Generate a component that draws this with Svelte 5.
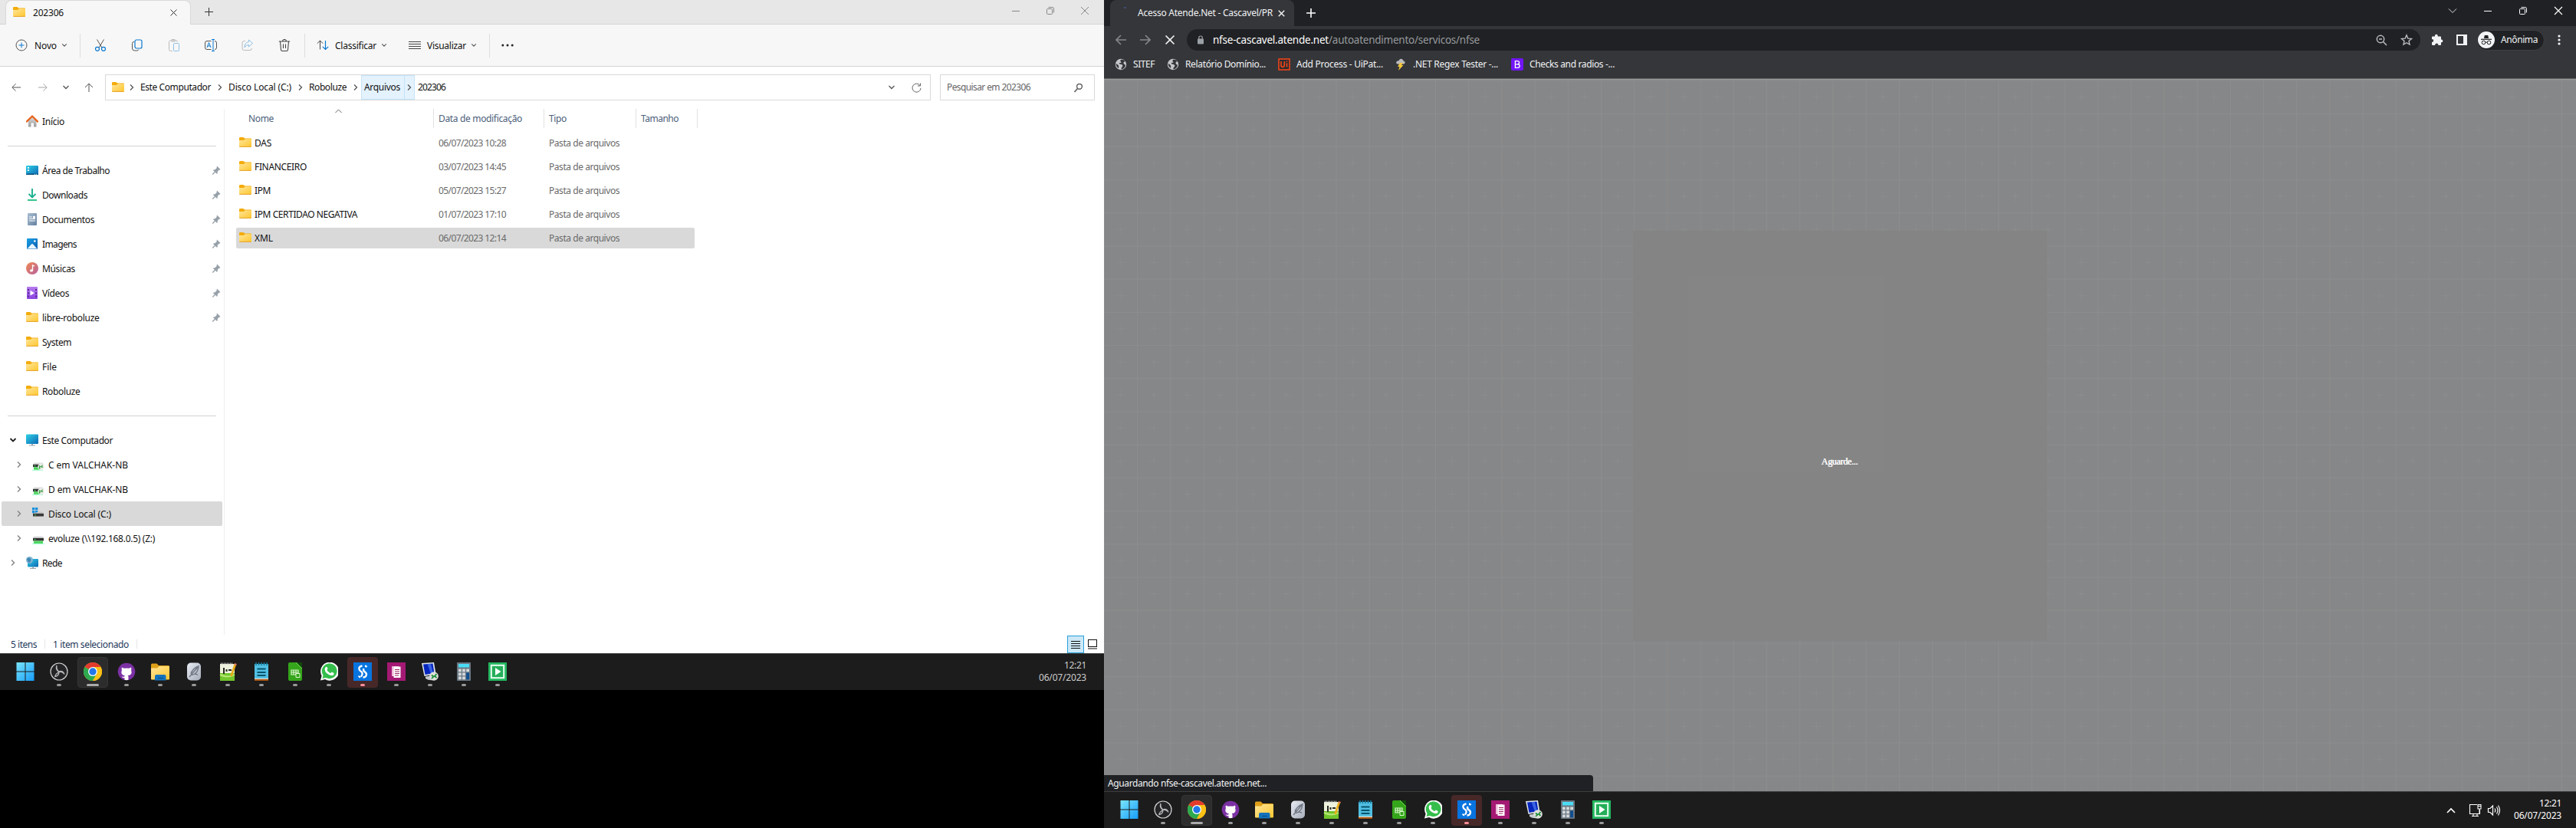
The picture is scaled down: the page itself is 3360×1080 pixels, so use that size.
<script>
  // Adjusts tracking so a label occupies the given width.
  function fit(node, width) {
    const natural = node.getBoundingClientRect().width;
    const count = node.textContent.length;
    node.style.letterSpacing = `${(width - natural) / count}px`;
  }

  const quick = [
    { icon: 'desktop', label: 'Área de Trabalho', w: 88, pin: true },
    { icon: 'download', label: 'Downloads', w: 59, pin: true },
    { icon: 'doc', label: 'Documentos', w: 68, pin: true },
    { icon: 'image', label: 'Imagens', w: 45, pin: true },
    { icon: 'music', label: 'Músicas', w: 43, pin: true },
    { icon: 'video', label: 'Vídeos', w: 35, pin: true },
    { icon: 'folder', label: 'libre-roboluze', w: 74.5, pin: true },
    { icon: 'folder', label: 'System', w: 38 },
    { icon: 'folder', label: 'File', w: 19 },
    { icon: 'folder', label: 'Roboluze', w: 49.5 }
  ];
  const tree = [
    { icon: 'pc', label: 'Este Computador', w: 92, open: true },
    { icon: 'netoff', label: 'C em VALCHAK-NB', w: 104, child: true },
    { icon: 'netoff', label: 'D em VALCHAK-NB', w: 104, child: true },
    { icon: 'osdisk', label: 'Disco Local (C:)', w: 82, child: true, selected: true },
    { icon: 'netdisk', label: 'evoluze (\\\\192.168.0.5) (Z:)', w: 139, child: true },
    { icon: 'network', label: 'Rede', w: 26 }
  ];
  const files = [
    { name: 'DAS', w: 22, date: '06/07/2023 10:28' },
    { name: 'FINANCEIRO', w: 68, date: '03/07/2023 14:45' },
    { name: 'IPM', w: 21, date: '05/07/2023 15:27' },
    { name: 'IPM CERTIDAO NEGATIVA', w: 134, date: '01/07/2023 17:10' },
    { name: 'XML', w: 24, date: '06/07/2023 12:14', selected: true }
  ];
  const apps = ['win', 'obs', 'chrome', 'github', 'files', 'feather', 'notepadpp', 'notepad', 'calc', 'whatsapp', 'sourcetree', 'pages', 'remote', 'calculator', 'camtasia'];
  const bookmarks = [
    { icon: 'globe', label: 'SITEF', w: 28, slot: 60 },
    { icon: 'globe', label: 'Relatório Domínio...', w: 105, slot: 137 },
    { icon: 'uipath', label: 'Add Process - UiPat...', w: 113, slot: 144 },
    { icon: 'storm', label: '.NET Regex Tester -...', w: 111, slot: 144 },
    { icon: 'bootstrap', label: 'Checks and radios -...', w: 111, slot: 144 }
  ];
</script>

{#snippet icon(name)}
  <svg class="i16" viewBox="0 0 16 16" fill="none">
    {#if name === 'folder'}
      <g transform="translate(0 -.700)">
        <path d="M0 3q0-1.300 1.200-1.300h4L7.400 3.300H15q1 0 1 1V6H0z" fill="#f3ac0c" />
        <path d="M0 5.800h5.800L8 4h7.200q.8 0 .8.800v8.600q0 1-1 1H1q-1 0-1-1z" fill="url(#gFolder)" />
        <path d="M.3 14.100h15.400" stroke="#e5a32d" />
      </g>
    {:else if name === 'home'}
      <path d="M3 7v8.500h3.500v-4.200q0-.8.800-.8h1.900q.8 0 .8.800v4.200H13.500V7L8 2z" fill="url(#gGrey)" />
      <path d="M.8 8.600L8 1.500l7.200 7.100" stroke="#e8611a" stroke-width="2.200" stroke-linecap="round" stroke-linejoin="round" />
    {:else if name === 'desktop'}
      <rect y="2" width="16" height="12" rx="1" fill="url(#gBlue)" />
      <path d="M0 12.500h16V13q0 1-1 1H1q-1 0-1-1z" fill="#0a4f7f" />
      <path d="M2 4h2v1.700H2zM2 7.200h2v1.700H2z" fill="#fff" /><path d="M11 13.300h1M13 13.300h1" stroke="#bff" />
    {:else if name === 'download'}
      <path d="M8 0v11M3.500 7L8 11.400 12.500 7" stroke="#1bb08f" stroke-width="1.900" /><path d="M2 15h12" stroke="#35c58e" stroke-width="2" />
    {:else if name === 'doc'}
      <rect x="2" width="12" height="16" rx="1" fill="url(#gDoc)" /><path d="M4 5h4M4 7.500h8M4 10h8" stroke="#fff" stroke-width="1.200" /><path d="M9 3.800h3v3H9z" fill="#fff" />
    {:else if name === 'image'}
      <rect x="1" y="1" width="14" height="14" rx="1" fill="url(#gImg)" /><path d="M1.500 14.500L7 8.500q1-.8 2 0l5.500 6z" fill="#e8f6ff" /><circle cx="11.300" cy="4.500" r="1.300" fill="#fff" />
    {:else if name === 'music'}
      <circle cx="8" cy="8" r="8" fill="url(#gMusic)" /><ellipse cx="7" cy="10.900" rx="2" ry="1.700" fill="#fff" /><path d="M8.500 11V4l2.500 1.200" stroke="#fff" stroke-width="1.300" />
    {:else if name === 'video'}
      <rect x="1" width="14" height="16" rx="1" fill="url(#gVid)" /><path d="M3 3v11M13 3v11" stroke="#4b2382" stroke-width="1.700" stroke-dasharray="2 2.200" /><path d="M5.500 4.800v6.800L11 8.200z" fill="#fff" />
    {:else if name === 'pc'}
      <rect y=".5" width="16" height="12.500" rx="1" fill="url(#gBlue)" /><path d="M7 13h2v1.500H7zM4 14.500h8v1H4z" fill="#9aa3aa" />
    {:else if name === 'network'}
      <rect x="2" y="3" width="14" height="10.500" rx="1" fill="url(#gBlue)" /><path d="M8 13.500h2v1.500H8zM5 15h8v1H5z" fill="#9aa3aa" /><circle cx="4.500" cy="4.500" r="4.500" fill="#7fb4d2" /><path d="M1 3q3-3 5 0 1 3-2 5Q2 6 1 3z" fill="#3f86b4" />
    {:else if name === 'netoff'}
      <path d="M2.500 5.500h11L15 8H1z" fill="#dcdddf" /><rect x="1" y="7.800" width="9" height="3.400" fill="#333" /><path d="M2.500 9.700h2" stroke="#42e35c" /><path d="M2 11.300h7v3.500H2z" fill="#4dd45e" /><path d="M0 15.300h14" stroke="#9fc" /><circle cx="11.500" cy="11" r="4.200" fill="#ececea" /><path d="M9 12l1.500-1.500L9 9.500M13.500 8.500L12 10.500l2 1M9 13.500L10.500 12M12.500 12v-1.500" stroke="#2e9b35" stroke-width="1.100" />
    {:else if name === 'netdisk'}
      <path d="M2.500 5.500h11L15 8H1z" fill="#dcdddf" /><rect x="1" y="7.800" width="14" height="3.600" fill="#333" /><path d="M2.500 9.800h2" stroke="#42e35c" /><path d="M2 11.500h12V15H2z" fill="#4dd45e" /><path d="M0 15.300h16" stroke="#9fc" />
    {:else if name === 'osdisk'}
      <path d="M0 0h3.300v3.300H0zM4 0h3.300v3.300H4zM0 4h3.300v3.300H0zM4 4h3.300v3.300H4z" fill="#1490df" /><path d="M7.800 5.500H13L15 8H1z" fill="#c4c6c8" /><rect x="1" y="7.800" width="14" height="3.700" fill="#3a3a3a" /><path d="M3 9.800h2" stroke="#42e35c" />
    {:else if name === 'globe'}
      <circle cx="8" cy="8" r="7.200" fill="#c3c6ca" /><path d="M9 1.500q-3 1.500-1 3T5.500 6Q6 8 8.500 8t1.500 3q-2 1-1.500 3.500 5-1 5.500-6-2 0-2.500-2T14 4Q12 1.500 9 1.500zM1.500 7q3 1 3.500 2.500t0 3.500Q2 11.500 1.500 7z" fill="#35363a" />
    {:else if name === 'uipath'}
      <rect x="1" y="1" width="14" height="14" fill="#2b2c30" stroke="#fa4616" stroke-width="1.500" /><path d="M4 4v5q0 2.500 2 2.500T8.300 9V4M11.500 6.300v5.300M11.500 3.500v1.600" stroke="#fa4616" stroke-width="1.600" />
    {:else if name === 'storm'}
      <path d="M4 7.500Q1.500 7 2.500 4.500 4 3 5.500 3.200 7 0 10 1.200q1.500.8 1.500 2.300Q14 4 13.500 6t-2.500 1.500z" fill="#b9bbbd" /><path d="M7 6L4 11h2.500L5 16l6.500-7H9l2-3z" fill="#f6c83b" />
    {:else if name === 'bootstrap'}
      <rect width="16" height="16" rx="2" fill="#7215f5" /><path d="M5.400 3.700v8.600h3.300q2.500 0 2.500-2.300 0-2-2.500-2.200H5.400h3q2.200-.1 2.200-2.100 0-2-2.200-2z" stroke="#fff" stroke-width="1.300" />
    {:else if name === 'pin'}
      <path d="M9 2.500l4.500 4.500-1 .8h-1L9.700 10q.3 2-.6 3L3.800 8q1-1 2.800-.8L8.700 5V3.600z" fill="#97a0a8" /><path d="M6.500 10.300L3.200 13.500" stroke="#97a0a8" stroke-width="1.300" />
    {/if}
  </svg>
{/snippet}

{#snippet app(name)}
  <svg class="i24" viewBox="0 0 24 24" fill="none">
    {#if name === 'win'}
      <path d="M.5 0h11v11.500H.5zM12.500 0h11v11.500h-11zM.5 12.500h11V24H.5zM12.500 12.500h11V24h-11z" fill="url(#gWin)" />
    {:else if name === 'obs'}
      <circle cx="12" cy="12" r="11" fill="#252427" stroke="#d2d2d2" stroke-width="1.200" />
      <path d="M12 12Q7 10 9 4M12 12q5-2 7 3.500M12 12q0 6-5.500 6.500M9 4q-1 5 3 8M12 12q5 0 7 3.500M12 12q-4 3-5.500 6.500" stroke="#b9b9b9" stroke-width="1.300" />
    {:else if name === 'chrome'}
      <circle cx="12" cy="12" r="12" fill="#fbc116" /><path d="M12 12L1.600 6A12 12 0 0 1 22.400 6H12z" fill="#e33b2e" /><path d="M12 12L1.600 6A12 12 0 0 0 12 24l5.200-9z" fill="#2da94f" /><path d="M12 6h10.400A12 12 0 0 1 12 24l5.200-9z" fill="#fbc116" /><circle cx="12" cy="12" r="6" fill="#fff" /><circle cx="12" cy="12" r="4.700" fill="#2278ea" />
    {:else if name === 'github'}
      <circle cx="12" cy="12" r="11.300" fill="#7b30a3" /><path d="M6 6.500l2.800 1.300q3-.8 6.400 0L18 6.500q.8 2 .1 3.800 2.200 6-4.400 6.900l.8 1.300v4.300q-2.500.8-5 0v-2.600q-2.800.5-4-2 2.300 1 3.800.2l.5-1.200Q3.700 16.300 5.900 10.300 5.200 8.500 6 6.500z" fill="#fff" />
    {:else if name === 'files'}
      <path d="M0 3q0-1.500 1.500-1.500h6L10 4h12.500Q24 4 24 5.500V9H0z" fill="#dfa019" /><path d="M0 7.500h8L10.500 5H24v16.500q0 1-1 1H1q-1 0-1-1z" fill="url(#gFolder)" /><path d="M5 23.500v-5.500q0-2 2-2h10.500q2 0 2 2v5.500z" fill="#1272bd" /><path d="M9 20.500h7" stroke="#094b83" />
    {:else if name === 'feather'}
      <rect x="3" y=".5" width="18" height="23" rx="5" fill="url(#gSilver)" /><path d="M6 19L17 6M8 15q2-7 10-10-1 10-9 11.500M10 12l-2 1M13 15l4 1" stroke="#737986" stroke-width="1.500" />
    {:else if name === 'notepadpp'}
      <path d="M2 2h19v22H2z" fill="#eef1dd" /><path d="M2 14h19v10H2z" fill="#72c62d" /><path d="M2 16q10 5 19 0" stroke="#b9e878" stroke-width="2" /><path d="M3 1.500h15" stroke="#bbb" stroke-width="2" stroke-dasharray="1 1" /><path d="M7 7v8M10.500 9v3M13 10h4" stroke="#292b24" stroke-width="2" /><path d="M22 2L16.500 18" stroke="#e7ad1b" stroke-width="2.800" /><path d="M22.600 1.500L22 3.500" stroke="#d56f63" stroke-width="2.800" />
    {:else if name === 'notepad'}
      <path d="M3 2h18v20H3z" fill="#51bfe2" /><path d="M5 0v4M8.500 0v4M12 0v4M15.500 0v4M19 0v4" stroke="#137a9c" stroke-width="1.500" /><path d="M6.500 8.500h11M6.500 13h11M6.500 17h11" stroke="#07546e" stroke-width="1.800" /><path d="M3 21h18v3H3z" fill="#a55413" /><path d="M3 21.400h18" stroke="#f2e6d9" />
    {:else if name === 'calc'}
      <path d="M5 0h8l8 8v14q0 2-2 2H5q-2 0-2-2V2q0-2 2-2z" fill="#35a51b" /><path d="M13 0h8v8z" fill="#10480b" /><path d="M13 0l8 8" stroke="#78df55" /><path d="M7 10h9v6H7zM7 13h9M10 10v6M13 10v6" stroke="#dbf7ce" stroke-width="1.200" /><path d="M13 14.500h5v5h-5z" fill="#35a51b" stroke="#dbf7ce" />
    {:else if name === 'whatsapp'}
      <path d="M1 23.500l1.600-6A12 12 0 1 1 7 22z" fill="#fff" /><path d="M3.500 21l1.100-4A9.900 9.900 0 1 1 8 20z" fill="#35be4c" /><path d="M8 6q1.500-1 2.500 2l-1 2q1 2.500 4.500 4.200l1.800-1.700 2.800 1.400q0 4-4.200 3Q7 14.500 6.600 9 6.800 7 8 6z" fill="#fff" />
    {:else if name === 'sourcetree'}
      <rect width="24" height="24" fill="#0874df" /><path d="M11.500 4.500q-5 1-4 4.500.5 2 2.500 3t1.500 3.500-2 3M15 4.500q1.500.3 2.500 1.500M13.500 8q-1.500 2.500 1.500 4.500 3 2 1.500 5-1 2-4 2M7 17.500q.5 1.500 2 2" stroke="#fff" stroke-width="2.300" />
    {:else if name === 'pages'}
      <rect width="24" height="24" fill="#a41973" /><path d="M6 5h9v13H6z" fill="#eeb9d8" /><path d="M8.500 5.500h9V20h-9z" fill="#fff" /><path d="M10 9.500h6M10 12h6M10 14.500h6M10 17h5" stroke="#9a235f" />
    {:else if name === 'remote'}
      <path d="M1 1l16-1 2.500 15L4.500 18z" fill="#dce2e9" /><path d="M3 2.500l12.500-1L17.500 14l-12 2z" fill="#0625bd" /><path d="M8.500 2L13 15l3-.5L13 2z" fill="#3a63e2" /><path d="M6 18.500l7-1 4 5.500q-7 1-11-2z" fill="#c3c9ce" /><circle cx="17" cy="18" r="5.800" fill="#dededb" /><path d="M14 21l2.500-2.500L14 16.500M20.500 15L18 18l2.500 2" stroke="#168b32" stroke-width="1.700" />
    {:else if name === 'calculator'}
      <rect x="3" width="18" height="24" rx="1" fill="#6b7781" /><path d="M5 2h14v4.500H5z" fill="#4bdcf5" /><path d="M5 8.500h3.800v3.800H5zM10.100 8.500h3.800v3.800h-3.800zM15.200 8.500H19v3.800h-3.800zM5 13.500h3.800v3.800H5zM10.100 13.500h3.800v3.800h-3.800zM5 18.500h3.800v3.800H5zM10.100 18.500h3.800v3.800h-3.800z" fill="#d4d9dd" /><path d="M15.200 13.500H19v8.800h-3.800z" fill="#104d91" />
    {:else if name === 'camtasia'}
      <rect width="24" height="24" fill="#23b760" /><rect x="3.800" y="3.800" width="16.400" height="16.400" fill="#24ae59" stroke="#eafff1" stroke-width="2" /><path d="M9 7v10l7.500-5z" fill="#fff" />
    {/if}
  </svg>
{/snippet}

{#snippet chev(dir)}
  <svg class="chev" class:turned={dir === 'down'} viewBox="0 0 10 10" fill="none"><path d="M3 1.500L6.500 5 3 8.500" /></svg>
{/snippet}

{#snippet taskbar(tray)}
  <div class="taskbar">
    <div class="apps">
      {#each apps as a}
        <div class="app" class:active={a === 'chrome'} class:alert={a === 'sourcetree'}>
          {@render app(a)}
          {#if a !== 'win'}<i></i>{/if}
        </div>
      {/each}
    </div>
    {#if tray}
      <div class="tray">
        <svg width="12" height="12" viewBox="0 0 12 12" fill="none"><path d="M1 9l5-5 5 5" stroke="#fff" stroke-width="1.600" /></svg>
        <svg class="net" width="18" height="18" viewBox="0 0 18 18" fill="none" stroke="#fff" stroke-width="1.100"><path d="M11 1.500H1.500v12h13V8M6 13.500v2.500M11 13.500v2.500M4 16.500h9M12 1.500h4V7h-4zM14 7v6.500M12 3.500h4" /></svg>
        <svg width="18" height="16" viewBox="0 0 18 16" fill="none" stroke="#fff" stroke-width="1.200"><path d="M1.500 5.500H4L7.500 2v12L4 10.500H1.500zM10 5.500q1.500 2.500 0 5M12.500 3.500q3 4.500 0 9M14.500 1.500q4 6.500 0 13" /></svg>
      </div>
    {/if}
    <div class="clock"><span use:fit={29}>12:21</span><span use:fit={62}>06/07/2023</span></div>
  </div>
{/snippet}

<svg class="defs" aria-hidden="true">
  <defs>
    <linearGradient id="gFolder" x1="0" y1="0" x2="1" y2="1"><stop stop-color="#ffe59b" /><stop offset="1" stop-color="#ffc72e" /></linearGradient>
    <linearGradient id="gBlue" x1="0" y1="0" x2="1" y2="1"><stop stop-color="#2fd0e6" /><stop offset="1" stop-color="#0d69b5" /></linearGradient>
    <linearGradient id="gWin" gradientUnits="userSpaceOnUse" x1="0" y1="0" x2="24" y2="24"><stop stop-color="#7be6fc" /><stop offset="1" stop-color="#159cf9" /></linearGradient>
    <linearGradient id="gDoc" x1="0" y1="0" x2="1" y2="1"><stop stop-color="#a9bfd2" /><stop offset="1" stop-color="#6581a0" /></linearGradient>
    <linearGradient id="gImg" x1="0" y1="0" x2="1" y2="1"><stop stop-color="#19a1e7" /><stop offset="1" stop-color="#0a5cae" /></linearGradient>
    <linearGradient id="gMusic" x1="0" y1="0" x2="1" y2="1"><stop stop-color="#f08a52" /><stop offset="1" stop-color="#b55f9f" /></linearGradient>
    <linearGradient id="gVid" x1="0" y1="0" x2="0" y2="1"><stop stop-color="#b77cf0" /><stop offset="1" stop-color="#8a42e0" /></linearGradient>
    <linearGradient id="gGrey" x1="0" y1="0" x2="0" y2="1"><stop stop-color="#ddd" /><stop offset="1" stop-color="#9b9b9b" /></linearGradient>
    <linearGradient id="gSilver" x1="0" y1="0" x2="1" y2="1"><stop stop-color="#e9ecf4" /><stop offset="1" stop-color="#a4adba" /></linearGradient>
  </defs>
</svg>

<div class="screens">
  <section class="monitor-a">
    <div class="window">
      <header class="titlebar">
        <div class="tab">
          {@render icon('folder')}
          <span use:fit={40}>202306</span>
          <svg class="x" width="9" height="9" viewBox="0 0 9 9" stroke="#333"><path d="M.5.500l8 8M8.500.500l-8 8" /></svg>
        </div>
        <svg class="plus" width="11" height="11" viewBox="0 0 11 11" stroke="#333"><path d="M5.500 0v11M0 5.500h11" /></svg>
        <div class="winbtns">
          <svg width="12" height="12" viewBox="0 0 12 12" fill="none" stroke="#858585"><path d="M1 6.500h10" /></svg>
          <svg width="12" height="12" viewBox="0 0 12 12" fill="none" stroke="#858585"><rect x="1.500" y="3.500" width="7" height="7" rx="1" /><path d="M3.500 1.500h5q2 0 2 2v5" /></svg>
          <svg width="12" height="12" viewBox="0 0 12 12" fill="none" stroke="#858585"><path d="M1 1l10 10M11 1L1 11" /></svg>
        </div>
      </header>

      <div class="toolbar">
        <svg width="16" height="16" viewBox="0 0 16 16" fill="none"><circle cx="8" cy="8" r="7" stroke="#555" /><path d="M8 4.500v7M4.500 8h7" stroke="#0a78d0" /></svg>
        <span class="lbl" use:fit={29}>Novo</span>
        <span class="tc">{@render chev('down')}</span>
        <span class="sep"></span>
        <div class="tools">
          <svg viewBox="0 0 16 16" fill="none"><path d="M3.500.500l6.300 10.500M12.500.500L6.200 11" stroke="#555" /><circle cx="4" cy="12.800" r="2.500" stroke="#0a78d0" stroke-width="1.200" /><circle cx="12" cy="12.800" r="2.500" stroke="#0a78d0" stroke-width="1.200" /></svg>
          <svg viewBox="0 0 16 16" fill="none"><path d="M4 3.500q-2.500 0-2.500 2V12q0 3 3 3h3q2 0 2.500-1.500" stroke="#555" /><rect x="5" y="1" width="9" height="11" rx="2" stroke="#0a78d0" stroke-width="1.200" /></svg>
          <svg viewBox="0 0 16 16" fill="none"><path d="M6 15.500H3.500Q1.500 15.500 1.500 13.500V3.500Q1.500 2 3.500 2H11q1.500 0 1.500 1.500M5 .5h4v2.500H5z" stroke="#bbb" /><rect x="7.500" y="5.500" width="7" height="10" rx="1" stroke="#8cbfe6" /></svg>
          <svg viewBox="0 0 16 16" fill="none"><path d="M8.500 2.500H3Q.5 2.500.5 5v6q0 2.500 2.500 2.500h5.500M13 2.500q2.500 0 2.500 2.500v6q0 2.500-2.500 2.500" stroke="#555" /><path d="M3 11l2.500-6.500L8 11M4 9h3M11 .5v15M9 .5h4M9 15.500h4" stroke="#0a78d0" /></svg>
          <svg viewBox="0 0 16 16" fill="none"><path d="M5 2.500H3.500Q1 2.500 1 5v7q0 2.500 2.500 2.500h7.500q2.500 0 2.500-2.500" stroke="#bbb" /><path d="M9.500 1l5 4.500-5 4.500V7.500Q6 7.500 4 11q0-6.500 5.500-7.500z" stroke="#8cbfe6" /></svg>
          <svg viewBox="0 0 16 16" fill="none"><path d="M.8 3h14.400M5.500 3q0-2.500 2.500-2.500T10.500 3M2.500 3l1 11q.2 1.500 1.700 1.500h5.600q1.500 0 1.700-1.500l1-11M6.500 6.500v5.500M9.500 6.500v5.500" stroke="#444" stroke-width="1.100" /></svg>
        </div>
        <span class="sep b"></span>
        <svg class="sort" width="16" height="14" viewBox="0 0 16 14" fill="none"><path d="M4.500 12.500V1M.8 4.700L4.500 1l3.700 3.700" stroke="#444" /><path d="M11.500 1v11.500M7.800 8.800l3.700 3.700 3.700-3.700" stroke="#0a78d0" stroke-width="1.200" /></svg>
        <span class="lbl sortl" use:fit={54}>Classificar</span>
        <span class="tc">{@render chev('down')}</span>
        <svg class="view" width="16" height="12" viewBox="0 0 16 12" stroke="#444"><path d="M0 1.500h16M0 4.500h16M0 7.500h16M0 10.500h16" /></svg>
        <span class="lbl viewl" use:fit={51}>Visualizar</span>
        <span class="tc">{@render chev('down')}</span>
        <span class="sep c"></span>
        <svg class="dots" width="16" height="4" viewBox="0 0 16 4" fill="#222"><circle cx="1.800" cy="2" r="1.500" /><circle cx="8" cy="2" r="1.500" /><circle cx="14.200" cy="2" r="1.500" /></svg>
      </div>

      <div class="nav">
        <div class="arrows">
          <svg width="12" height="12" viewBox="0 0 12 12" fill="none" stroke="#555"><path d="M12 6H1M5.500 1.300L.8 6l4.700 4.700" /></svg>
          <svg width="12" height="12" viewBox="0 0 12 12" fill="none" stroke="#a5a5a5"><path d="M0 6h11M6.500 1.300L11.200 6l-4.700 4.700" /></svg>
          {@render chev('down')}
          <svg width="12" height="12" viewBox="0 0 12 12" fill="none" stroke="#555"><path d="M6 12V1M1 6l5-5 5 5" /></svg>
        </div>
        <div class="address">
          {@render icon('folder')}
          <span class="cs first">{@render chev('right')}</span>
          <span use:fit={92}>Este Computador</span>
          <span class="cs">{@render chev('right')}</span>
          <span use:fit={82}>Disco Local (C:)</span>
          <span class="cs">{@render chev('right')}</span>
          <span use:fit={49}>Roboluze</span>
          <span class="cs last">{@render chev('right')}</span>
          <span class="hot"><span use:fit={47}>Arquivos</span></span>
          <span class="hotc">{@render chev('right')}</span>
          <span class="cur" use:fit={36}>202306</span>
          <span class="adr">
            {@render chev('down')}
            <svg width="13" height="13" viewBox="0 0 13 13" fill="none" stroke="#666"><path d="M11 3.500A5.500 5.500 0 1 0 12 7M11.500.500v3.500H8" /></svg>
          </span>
        </div>
        <div class="search">
          <span use:fit={109}>Pesquisar em 202306</span>
          <svg width="13" height="13" viewBox="0 0 13 13" fill="none" stroke="#666"><circle cx="8" cy="4.800" r="3.400" stroke-width="1.500" /><path d="M5.500 7.500l-4 4.500" stroke-width="1.800" /></svg>
        </div>
      </div>

      <div class="body">
        <aside>
          <div class="item">{@render icon('home')}<span use:fit={29}>Início</span></div>
          <hr />
          {#each quick as q}
            <div class="item">{@render icon(q.icon)}<span use:fit={q.w}>{q.label}</span>{#if q.pin}<b>{@render icon('pin')}</b>{/if}</div>
          {/each}
          <hr />
          {#each tree as t}
            <div class="item tree" class:child={t.child} class:selected={t.selected} class:open={t.open}>
              <em>{@render chev(t.open ? 'down' : 'right')}</em>{@render icon(t.icon)}<span use:fit={t.w}>{t.label}</span>
            </div>
          {/each}
        </aside>
        <main>
          <div class="cols head">
            <span class="c0"><span use:fit={33}>Nome</span><svg class="asc" width="9" height="6" viewBox="0 0 9 6" fill="none" stroke="#666"><path d="M.5 5l4-4 4 4" /></svg></span>
            <span><span use:fit={109}>Data de modificação</span></span>
            <span><span use:fit={23}>Tipo</span></span>
            <span><span use:fit={49}>Tamanho</span></span>
          </div>
          {#each files as f}
            <div class="cols row" class:selected={f.selected}>
              <span class="name">{@render icon('folder')}<span use:fit={f.w}>{f.name}</span></span>
              <span><span use:fit={88}>{f.date}</span></span>
              <span><span use:fit={92}>Pasta de arquivos</span></span>
            </div>
          {/each}
        </main>
      </div>

      <footer>
        <span class="s1"><span use:fit={34}>5 itens</span></span>
        <span class="s2"><span use:fit={99}>1 item selecionado</span></span>
        <span class="vb on"><svg width="12" height="12" viewBox="0 0 12 12" stroke="#111"><path d="M0 1.500h12M0 4.500h12M0 7.500h12M0 10.500h12" /></svg></span>
        <span class="vb"><svg width="12" height="13" viewBox="0 0 12 13" fill="#fff" stroke="#111"><rect x=".5" y=".5" width="11" height="9" /><path d="M0 12h12" /></svg></span>
      </footer>
    </div>
    {@render taskbar(false)}
  </section>

  <section class="monitor-b">
    <header class="ctabs">
      <div class="ctab">
        <i class="spin"></i>
        <span use:fit={176}>Acesso Atende.Net - Cascavel/PR</span>
        <svg width="9" height="9" viewBox="0 0 9 9" stroke="#eee" stroke-width="1.500"><path d="M.8.800l7.400 7.400M8.200.800L.8 8.200" /></svg>
      </div>
      <svg class="cplus" width="12" height="12" viewBox="0 0 12 12" stroke="#fff" stroke-width="1.600"><path d="M6 0v12M0 6h12" /></svg>
      <div class="cwin">
        <svg width="12" height="12" viewBox="0 0 12 12" fill="none" stroke="#ddd"><path d="M1 3.500l5 5 5-5" /></svg>
        <svg width="12" height="12" viewBox="0 0 12 12" fill="none" stroke="#fff"><path d="M1 6.500h10" /></svg>
        <svg width="12" height="12" viewBox="0 0 12 12" fill="none" stroke="#fff"><rect x="1.500" y="3.500" width="7" height="7" rx="1" /><path d="M3.500 1.500h5q2 0 2 2v5" /></svg>
        <svg width="12" height="12" viewBox="0 0 12 12" fill="none" stroke="#fff" stroke-width="1.200"><path d="M1 1l10 10M11 1L1 11" /></svg>
      </div>
    </header>

    <div class="cbar">
      <div class="carrows">
        <svg width="14" height="14" viewBox="0 0 14 14" fill="none" stroke="#85878a" stroke-width="1.600"><path d="M14 7H1.500M7 1L1 7l6 6" /></svg>
        <svg width="14" height="14" viewBox="0 0 14 14" fill="none" stroke="#85878a" stroke-width="1.600"><path d="M0 7h12.500M7 1l6 6-6 6" /></svg>
        <svg width="14" height="14" viewBox="0 0 14 14" fill="none" stroke="#eee" stroke-width="1.700"><path d="M1.500 1.500l11 11M12.500 1.500l-11 11" /></svg>
      </div>
      <div class="omni">
        <svg width="10" height="12" viewBox="0 0 10 12" fill="none"><rect x="1" y="4.500" width="8" height="7" rx="1" fill="#9aa0a6" /><path d="M2.800 5V3q0-2 2.200-2t2.200 2v2" stroke="#9aa0a6" stroke-width="1.200" /></svg>
        <span class="host" use:fit={151}>nfse-cascavel.atende.net</span><span class="path" use:fit={197}>/autoatendimento/servicos/nfse</span>
        <svg class="zm" width="15" height="15" viewBox="0 0 15 15" fill="none" stroke="#b8babd" stroke-width="1.500"><circle cx="6" cy="6" r="4.700" /><path d="M9.500 9.500l4.500 4.500M4 6h4" /></svg>
        <svg width="16" height="16" viewBox="0 0 16 16" fill="none" stroke="#b8babd" stroke-width="1.400"><path d="M8 1.800l1.800 4.300 4.700.4L11 9.500l1 4.600-4-2.400-4 2.400 1-4.600L1.500 6.500l4.700-.4z" /></svg>
      </div>
      <div class="cright">
        <svg width="16" height="16" viewBox="0 0 16 16" fill="#f1f3f4"><path d="M1 4.500q0-1 1-1h3Q4.700.700 6.800.700T8.700 3.500H12q1 0 1 1v3q2.300-.2 2.300 1.900T13 11.300V14q0 1-1 1H9.500q0-2.500-2.200-2.500T5 15H2q-1 0-1-1v-3q2.200-.2 2.200-2T1 7z" /></svg>
        <svg width="14" height="14" viewBox="0 0 14 14"><path fill="#f1f3f4" fill-rule="evenodd" d="M0 0h14v14H0zM2 2v10h7V2z" /></svg>
        <div class="chip">
          <svg width="22" height="22" viewBox="0 0 22 22" fill="none"><circle cx="11" cy="11" r="11" fill="#f1f3f4" /><path d="M8 9l.8-4h4.400l.8 4z" fill="#202124" /><path d="M4 10.300h14" stroke="#202124" stroke-width="1.200" /><circle cx="7.500" cy="14.500" r="2.300" stroke="#202124" /><circle cx="14.500" cy="14.500" r="2.300" stroke="#202124" /><path d="M9.800 14.200h2.400" stroke="#202124" /></svg>
          <span use:fit={48}>Anônima</span>
        </div>
        <svg class="kebab" width="4" height="14" viewBox="0 0 4 14" fill="#f1f3f4"><circle cx="2" cy="2" r="1.600" /><circle cx="2" cy="7" r="1.600" /><circle cx="2" cy="12" r="1.600" /></svg>
      </div>
    </div>

    <div class="marks">
      {#each bookmarks as b}
        <div class="mark" style:width="{b.slot}px">{@render icon(b.icon)}<span use:fit={b.w}>{b.label}</span></div>
      {/each}
    </div>

    <div class="page">
      <svg class="grid" width="1920" height="930">
        <defs>
          <linearGradient id="fh"><stop stop-color="#959697" stop-opacity="0" /><stop offset=".5" stop-color="#999a9b" /><stop offset="1" stop-color="#959697" stop-opacity="0" /></linearGradient>
          <linearGradient id="fv" x1="0" y1="0" x2="0" y2="1"><stop stop-color="#959697" stop-opacity="0" /><stop offset=".5" stop-color="#999a9b" /><stop offset="1" stop-color="#959697" stop-opacity="0" /></linearGradient>
          <pattern id="tile" width="43.200" height="43.200" patternUnits="userSpaceOnUse" x="0" y="1.500">
            <rect width="43.200" height="1" y="0" fill="#8c8d8d" /><rect width="1" height="43.200" fill="#8c8d8d" />
            <rect x="11" y="21.500" width="22" height="1" fill="url(#fh)" opacity=".3" /><rect x="21.500" y="11" width="1" height="22" fill="url(#fv)" opacity=".3" />
          </pattern>
        </defs>
        <rect width="1920" height="930" fill="url(#tile)" />
        <rect x="690" y="198" width="540" height="535" fill="#848484" />
        <rect x="762" y="256" width="256" height="255" fill="#858585" />
      </svg>
      <span class="wait" use:fit={47.5}>Aguarde...</span>
      <div class="bubble"><span use:fit={207}>Aguardando nfse-cascavel.atende.net...</span></div>
    </div>
    {@render taskbar(true)}
  </section>
</div>

<style>
  :global(body) { margin: 0; background: #000; overflow: hidden; }
  .defs { position: absolute; width: 0; height: 0; }
  .screens { display: flex; width: 3360px; height: 1080px; font: 12px/16px "Noto Sans", "Open Sans", sans-serif; color: #111; white-space: nowrap; }
  .screens * { box-sizing: border-box; }
  .screens svg { display: block; flex: none; }
  .screens span { flex: none; }
  .i16 { width: 16px; height: 16px; }
  .i24 { width: 24px; height: 24px; }
  .monitor-a { width: 1440px; display: flex; flex-direction: column; background: #000; }
  .monitor-b { width: 1920px; display: flex; flex-direction: column; background: #868788; }
  .window { height: 852px; background: #fff; display: flex; flex-direction: column; }
  .chev { width: 10px; height: 10px; color: #555; stroke: currentColor; stroke-width: 1.3; }
  .chev.turned { transform: rotate(90deg); }

  .titlebar { height: 32px; background: #e7e7e7; border-bottom: 1px solid #d3d3d3; display: flex; align-items: center; padding-left: 7px; }
  .tab { width: 242px; height: 32px; background: #f7f7f7; border: 1px solid #d9d9d9; border-bottom: 0; border-radius: 8px 8px 0 0; display: flex; align-items: center; padding: 0 17px 0 9px; }
  .tab span { margin-left: 10px; padding-top: 1px; }
  .tab .x { margin-left: auto; }
  .plus { margin-left: 18px; }
  .winbtns { display: flex; gap: 33px; margin-left: auto; padding-right: 19px; padding-bottom: 3px; }

  .toolbar { height: 55px; background: #f7f7f7; border-bottom: 1px solid #d3d3d3; display: flex; align-items: center; padding-left: 20px; }
  .lbl { padding-top: 2px; margin-left: 9px; }
  .tc { width: 10px; height: 10px; margin-left: 5px; transform: scale(.8); }
  .sep { width: 1px; height: 31px; background: #dedede; margin-left: 15px; }
  .tools { display: flex; gap: 32px; padding-left: 18px; }
  .tools svg { width: 16px; height: 16px; }
  .sep.b { margin-left: 18px; }
  .sort { margin-left: 15px; }
  .sortl { margin-left: 8px; }
  .view { margin-left: 27px; }
  .viewl { margin-left: 8px; }
  .dots { margin-left: 15px; }

  .nav { height: 55px; display: flex; align-items: center; padding: 0 0 1px 15px; }
  .arrows { width: 122px; display: flex; align-items: center; }
  .arrows svg:nth-child(2) { margin-left: 23px; }
  .arrows svg:nth-child(3) { margin-left: 19px; }
  .arrows svg:nth-child(4) { margin-left: 19px; }
  .address { width: 1077px; height: 34px; border: 1px solid #d9d9d9; display: flex; align-items: center; padding-left: 8px; }
  .cs { width: 23px; padding-left: 7px; }
  .cs.first { width: 21px; padding-left: 5px; }
  .cs.last { width: 19px; }
  .hot { height: 32px; width: 57px; background: #e3f2fd; border: 1px solid #c5e4f8; padding: 7px 0 0 3px; }
  .hotc { height: 32px; width: 13px; background: #e3f2fd; border: 1px solid #c5e4f8; border-left: 0; padding: 10px 0 0 1px; }
  .cur { margin-left: 4px; }
  .adr { display: flex; gap: 21px; margin-left: auto; padding-right: 11px; align-items: center; }
  .search { width: 202px; height: 34px; margin-left: 12px; border: 1px solid #d9d9d9; display: flex; align-items: center; justify-content: space-between; padding: 0 14px 0 8px; color: #666; }

  .body { flex: 1; display: flex; min-height: 0; }
  aside { width: 293px; border-right: 1px solid #eee; }
  hr { border: 0; height: 1px; background: #d3d3d3; margin: 16px 10px 15px; }
  .item { height: 32px; display: flex; align-items: center; padding-left: 34px; }
  .item > span { margin-left: 5px; padding-top: 1px; }
  .item b { margin-left: auto; margin-right: 2px; }
  .item.tree { margin: 0 2px; padding-left: 10px; border-radius: 2px; }
  .item em { width: 22px; height: 10px; }
  .item .chev { color: #888; stroke-width: 1.5; }
  .item.open .chev { color: #222; stroke-width: 1.8; }
  .item.child { padding-left: 18px; }
  .item.selected { background: #d9d9d9; }
  main { flex: 1; padding-left: 15px; }
  .cols { display: grid; grid-template-columns: 258px 144px 120px 80px; width: 602px; }
  .head { height: 25px; margin-bottom: 6px; color: #4c607a; }
  .head > span { border-right: 1px solid #e2e2e2; padding: 5px 0 0 6px; }
  .head > .c0 { padding-left: 16px; display: flex; gap: 80px; }
  .asc { margin-top: -5px; }
  .row { height: 27px; width: 598px; margin-bottom: 4px; align-items: center; color: #6a6a6a; border-radius: 2px; }
  .row > span { padding-left: 6px; }
  .row .name { display: flex; gap: 4px; padding-left: 4px; color: #111; align-items: center; }
  .row .name .i16 { margin-top: -1px; }
  .row.selected { background: #d9d9d9; }
  footer { height: 24px; display: flex; align-items: center; color: #1e395b; padding-left: 14px; }
  .s1 { width: 45px; border-right: 1px solid #e6e6e6; height: 12px; line-height: 14px; }
  .s2 { width: 120px; padding-left: 10px; border-right: 1px solid #e6e6e6; height: 12px; line-height: 14px; }
  .vb { width: 22px; height: 23px; display: flex; align-items: center; justify-content: center; margin-top: 1px; }
  .vb.on { margin-left: auto; background: #cce8f7; border: 1px solid #26a0da; }
  .vb:last-child { margin-right: 4px; }

  .taskbar { height: 48px; background: #1c1c1c; border-top: 1px solid #3d3d3d; display: flex; align-items: center; }
  .apps { display: flex; gap: 4px; padding-left: 13px; margin-right: auto; }
  .app { width: 40px; height: 40px; border-radius: 4px; display: flex; flex-direction: column; align-items: center; padding-top: 7px; }
  .app i { width: 6px; height: 3px; border-radius: 2px; background: #999; margin-top: 4px; }
  .app.active { background: #2c2c2c; border: 1px solid #353535; padding-top: 6px; }
  .app.active i { width: 16px; background: #aaa; }
  .app.alert { background: #472829; }
  .app.alert i { background: #ff8f98; }
  .tray { display: flex; align-items: center; padding-right: 17px; }
  .tray .net { margin: 0 6px 0 17px; }
  .clock { color: #ccc; width: 62px; margin-right: 23px; padding-bottom: 1px; display: flex; flex-direction: column; align-items: flex-end; }
  .monitor-b .clock { color: #fff; margin-right: 19px; }

  .ctabs { height: 34px; background: #202124; display: flex; align-items: center; padding-left: 8px; color: #f1f3f4; }
  .ctab { width: 240px; height: 34px; background: #35363a; border-radius: 8px 8px 0 0; display: flex; align-items: center; padding: 0 12px 0 18px; }
  .spin { width: 3px; height: 2px; background: #3b4d70; margin: -14px 15px 0 0; }
  .ctab svg { margin-left: auto; }
  .cplus { margin-left: 16px; }
  .cwin { display: flex; gap: 34px; margin-left: auto; padding: 0 17px 6px 0; }
  .cbar { height: 36px; background: #35363a; display: flex; align-items: center; padding-left: 15px; }
  .carrows { width: 93px; display: flex; gap: 18px; }
  .omni { width: 1609px; height: 28px; border-radius: 14px; background: #202124; display: flex; align-items: center; padding: 0 10px 0 13px; font-size: 13.5px; }
  .host { color: #fff; margin-left: 11px; }
  .path { color: #969a9e; }
  .zm { margin-left: auto; margin-right: 17px; }
  .cright { flex: 1; display: flex; align-items: center; padding-left: 14px; color: #f1f3f4; }
  .cright > svg:nth-child(2) { margin-left: 17px; }
  .chip { width: 89px; height: 27px; border-radius: 14px; background: #202124; border: 1px solid #3f4043; margin-left: 12px; display: flex; align-items: center; padding-left: 1px; gap: 8px; }
  .kebab { margin-left: 17px; }
  .marks { height: 33px; background: #35363a; border-bottom: 1px solid #606163; display: flex; align-items: center; padding: 0 0 4px 14px; color: #f1f3f4; gap: 8px; }
  .mark { display: flex; gap: 8px; align-items: center; }

  .page { flex: 1; position: relative; background: #868788; min-height: 0; overflow: hidden; border-top: 1px solid #9a9b9b; }
  .grid { position: absolute; left: 0; top: -1px; }
  .wait { position: absolute; left: 936px; top: 490px; font: 12px/16px "Liberation Serif", serif; color: #fff; text-shadow: -.5px 0 #fff; }
  .bubble { position: absolute; left: 0; bottom: 0; width: 638px; height: 21px; background: #202124; border-radius: 0 4px 0 0; color: #f1f3f4; padding: 3px 0 0 5px; }
</style>
